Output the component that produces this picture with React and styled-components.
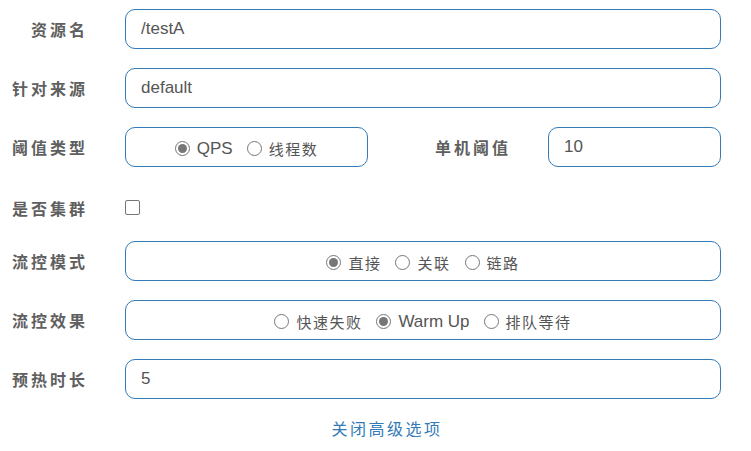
import styled, { createGlobalStyle } from "styled-components";

const GlobalStyle = createGlobalStyle`
  body {
    margin: 0;
    background: #ffffff;
    font-family: "Liberation Sans", Arial, "Noto Sans CJK SC", sans-serif;
    color: #555555;
  }
`;

const Form = styled.form`
  display: grid;
  grid-template-columns: 88px 1fr;
  column-gap: 37px;
  row-gap: 19px;
  padding: 9px 30px 0 0;
  width: 751px;
  box-sizing: border-box;
`;

const Label = styled.label`
  display: flex;
  align-items: center;
  justify-content: flex-end;
  height: 40px;
  font-family: "Noto Sans CJK SC", sans-serif;
  font-weight: 700;
  font-size: 16px;
  letter-spacing: 3px;
  color: #5f5f5f;
  white-space: nowrap;
`;

const TextInput = styled.input`
  box-sizing: border-box;
  width: 100%;
  height: 40px;
  border: 1px solid #337ab7;
  border-radius: 10px;
  padding: 0 15px;
  font-family: "Liberation Sans", Arial, sans-serif;
  font-size: 17px;
  color: #555555;
  outline: none;
  background: #fff;
`;

const Box = styled.div`
  box-sizing: border-box;
  height: 40px;
  border: 1px solid #337ab7;
  border-radius: 10px;
  display: flex;
  align-items: center;
  justify-content: center;
  gap: 14px;
  padding-top: 3px;
`;

const SplitRow = styled.div`
  display: grid;
  grid-template-columns: 243px 1fr 173px;
  column-gap: 37px;
`;

const Option = styled.label`
  display: flex;
  align-items: center;
  gap: 7px;
  font-family: ${(p) =>
    p.$latin ? '"Liberation Sans", Arial, sans-serif' : '"Noto Sans CJK SC", sans-serif'};
  font-size: ${(p) => (p.$latin ? "17px" : "15px")};
  letter-spacing: ${(p) => (p.$latin ? "0" : "1.5px")};
  color: #555555;
`;

const Radio = styled.span`
  box-sizing: border-box;
  width: 15px;
  height: 15px;
  border-radius: 50%;
  border: 1px solid #777777;
  display: flex;
  align-items: center;
  justify-content: center;
  &::after {
    content: "";
    width: 9px;
    height: 9px;
    border-radius: 50%;
    background: ${(p) => (p.$checked ? "#777777" : "transparent")};
  }
`;

const CheckCell = styled.div`
  display: flex;
  align-items: center;
  height: 29px;
  padding-top: 7px;
`;

const Checkbox = styled.span`
  box-sizing: border-box;
  width: 15px;
  height: 15px;
  border: 1px solid #767676;
  border-radius: 2px;
  background: #fff;
`;

const ShortLabel = styled(Label)`
  height: 29px;
  padding-top: 7px;
`;

const Toggle = styled.div`
  grid-column: 1 / -1;
  padding-left: 53px;
  text-align: center;
  line-height: 20px;
  font-family: "Noto Sans CJK SC", sans-serif;
  font-size: 16px;
  letter-spacing: 2.5px;
  color: #337ab7;
`;

function RadioGroup({ options }) {
  return (
    <Box>
      {options.map((o) => (
        <Option key={o.text} $latin={o.latin}>
          <Radio $checked={o.checked} />
          {o.text}
        </Option>
      ))}
    </Box>
  );
}

export default function App() {
  return (
    <>
      <GlobalStyle />
      <Form>
        <Label>资源名</Label>
        <TextInput defaultValue="/testA" />

        <Label>针对来源</Label>
        <TextInput defaultValue="default" />

        <Label>阈值类型</Label>
        <SplitRow>
          <RadioGroup
            options={[
              { text: "QPS", latin: true, checked: true },
              { text: "线程数" },
            ]}
          />
          <Label>单机阈值</Label>
          <TextInput defaultValue="10" />
        </SplitRow>

        <ShortLabel>是否集群</ShortLabel>
        <CheckCell>
          <Checkbox />
        </CheckCell>

        <Label>流控模式</Label>
        <RadioGroup
          options={[
            { text: "直接", checked: true },
            { text: "关联" },
            { text: "链路" },
          ]}
        />

        <Label>流控效果</Label>
        <RadioGroup
          options={[
            { text: "快速失败" },
            { text: "Warm Up", latin: true, checked: true },
            { text: "排队等待" },
          ]}
        />

        <Label>预热时长</Label>
        <TextInput defaultValue="5" />

        <Toggle>关闭高级选项</Toggle>
      </Form>
    </>
  );
}
